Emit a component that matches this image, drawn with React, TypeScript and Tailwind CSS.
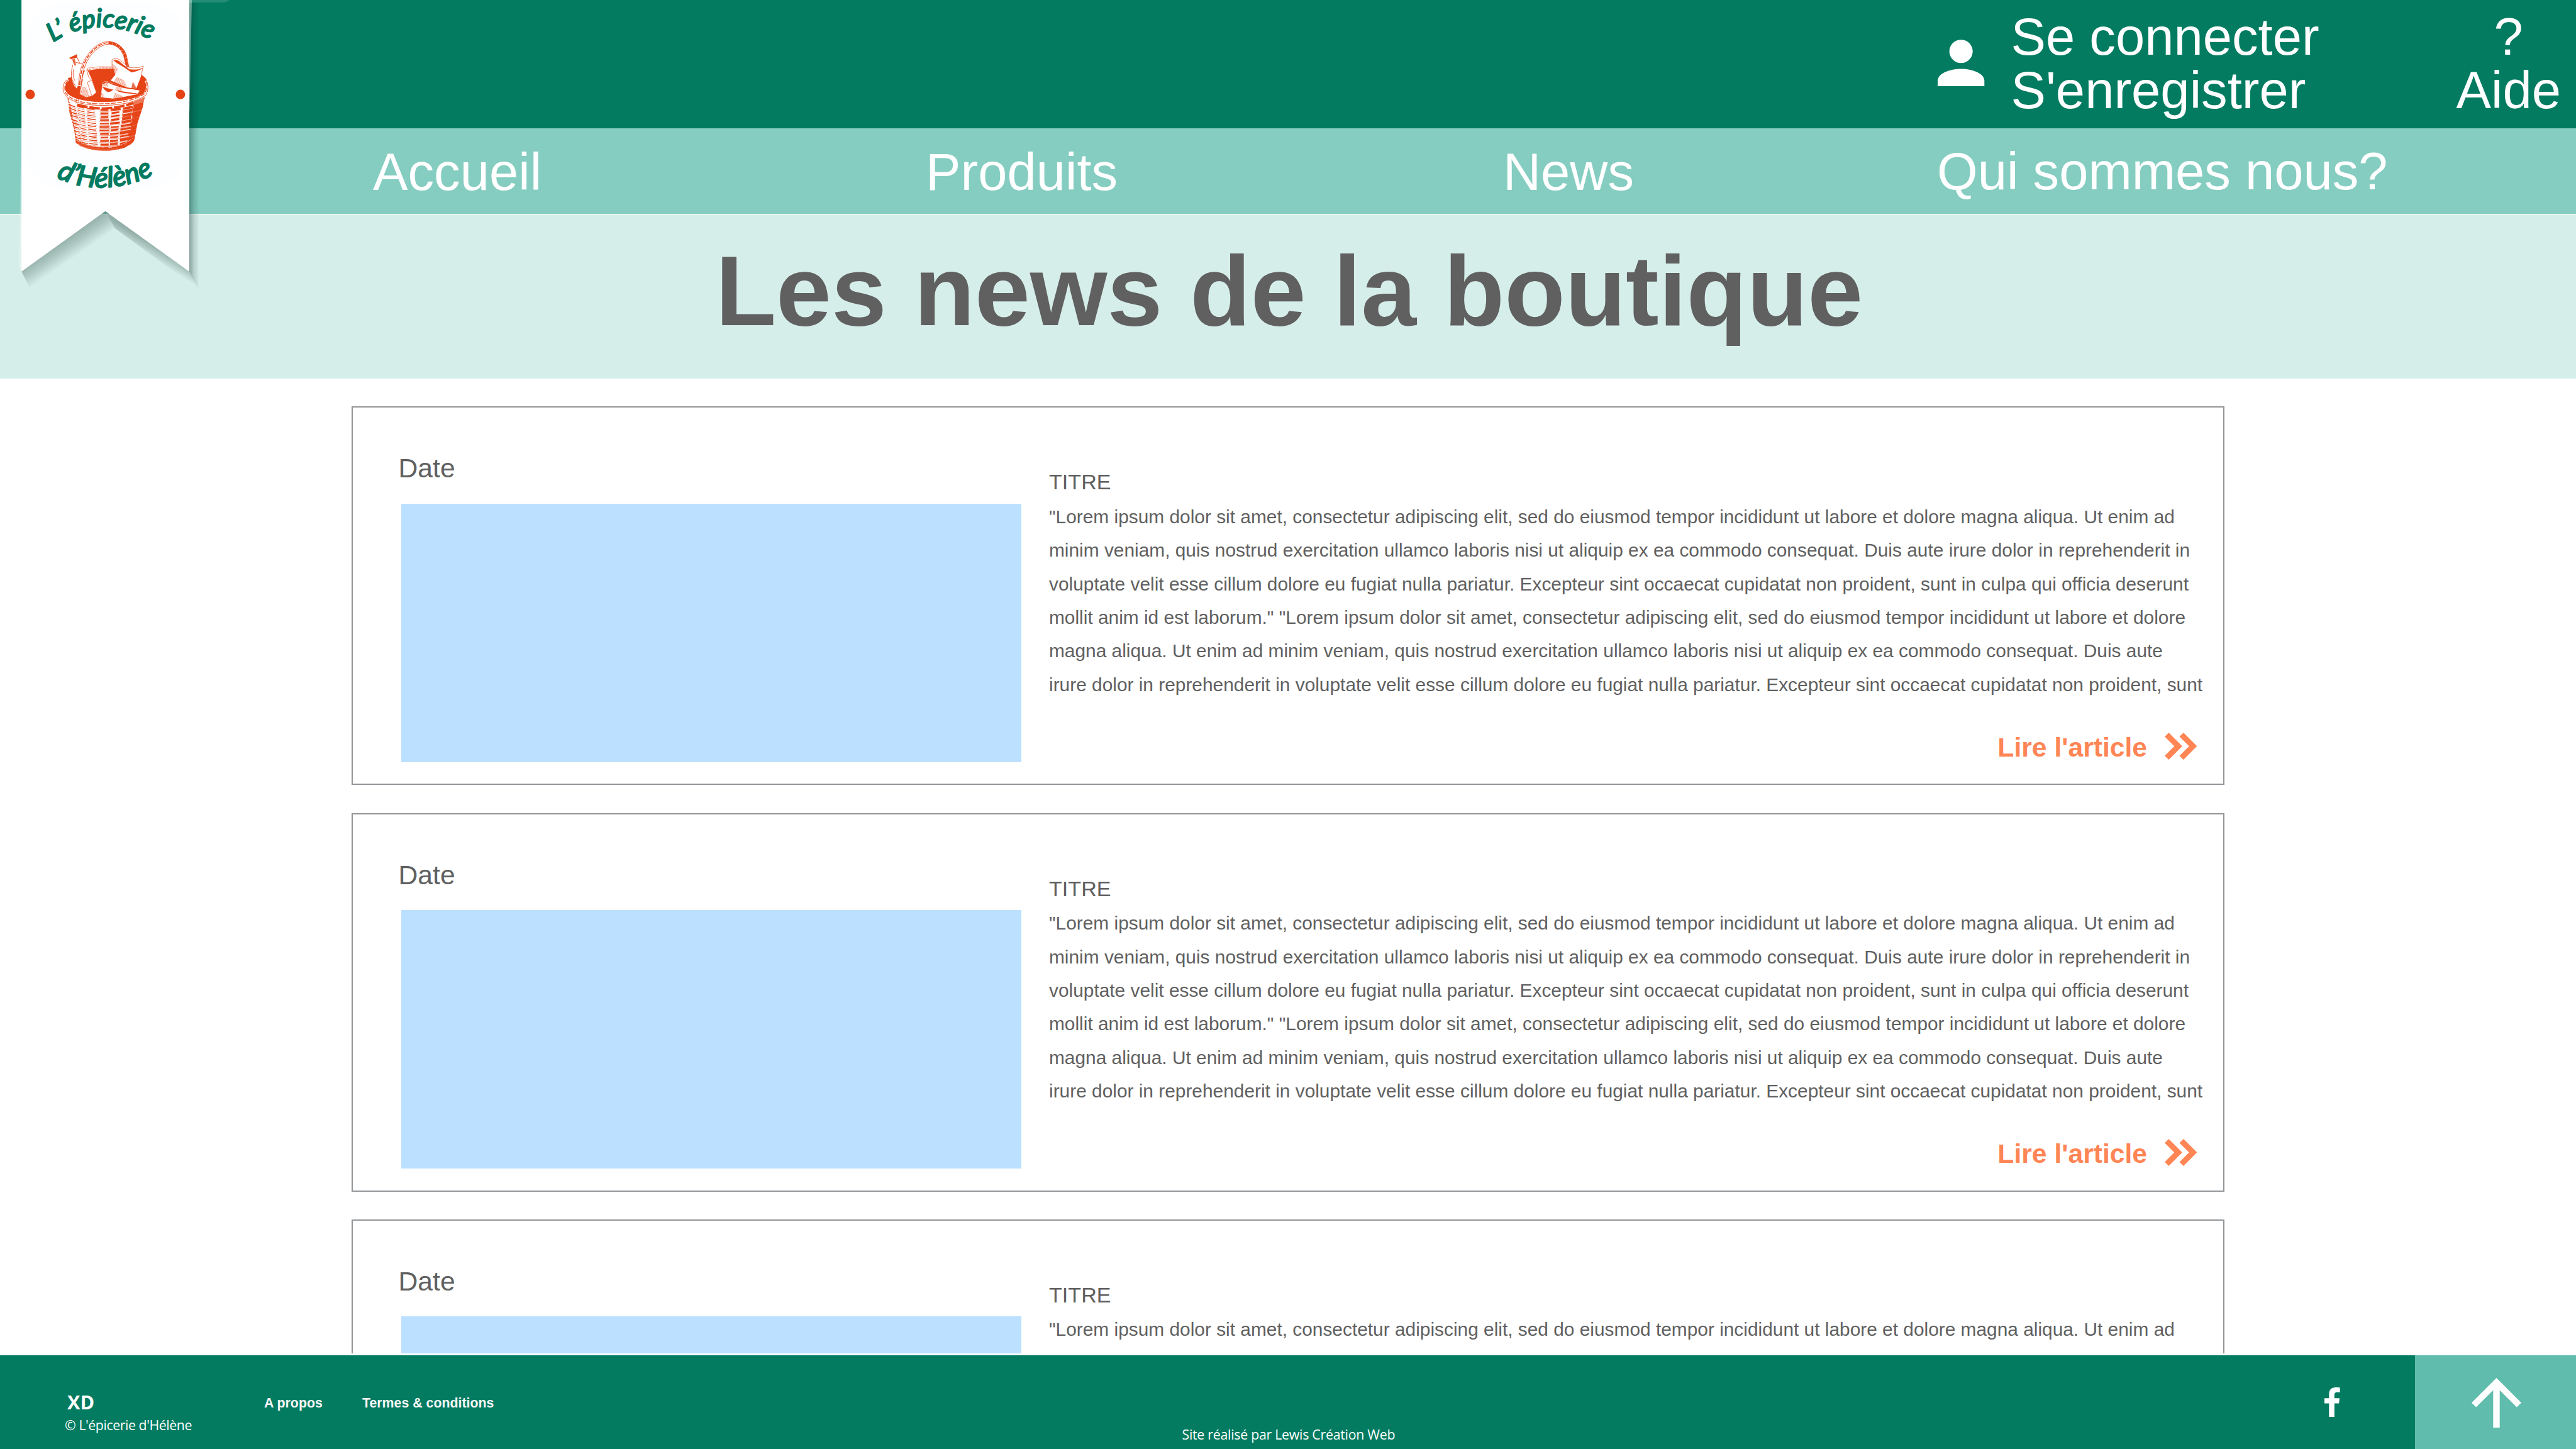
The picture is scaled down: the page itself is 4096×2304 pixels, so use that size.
import React from "react";

const ARTICLE_LINES = [
  '"Lorem ipsum dolor sit amet, consectetur adipiscing elit, sed do eiusmod tempor incididunt ut labore et dolore magna aliqua. Ut enim ad',
  "minim veniam, quis nostrud exercitation ullamco laboris nisi ut aliquip ex ea commodo consequat. Duis aute irure dolor in reprehenderit in",
  "voluptate velit esse cillum dolore eu fugiat nulla pariatur. Excepteur sint occaecat cupidatat non proident, sunt in culpa qui officia deserunt",
  'mollit anim id est laborum." "Lorem ipsum dolor sit amet, consectetur adipiscing elit, sed do eiusmod tempor incididunt ut labore et dolore',
  "magna aliqua. Ut enim ad minim veniam, quis nostrud exercitation ullamco laboris nisi ut aliquip ex ea commodo consequat. Duis aute",
  "irure dolor in reprehenderit in voluptate velit esse cillum dolore eu fugiat nulla pariatur. Excepteur sint occaecat cupidatat non proident, sunt",
];

const ORANGE = "#e64417";
const GREEN = "#027b61";

/** Deterministic noise, so that the wicker strokes never move between renders. */
function noise(n: number): number {
  const v = Math.sin(n * 127.1 + 11.7) * 43758.5453;
  return v - Math.floor(v);
}

const WICKER_COLUMNS = [
  { x: 165, w: 62, weight: 9 },
  { x: 240, w: 62, weight: 8 },
  { x: 325, w: 75, weight: 10 },
  { x: 445, w: 78, weight: 17 },
  { x: 545, w: 78, weight: 20 },
  { x: 650, w: 86, weight: 25 },
  { x: 745, w: 90, weight: 30 },
];

function Wicker() {
  const strokes: React.ReactElement[] = [];
  WICKER_COLUMNS.forEach((col, c) => {
    for (let r = 0; r < 12; r++) {
      const n = c * 31 + r;
      const centre = col.x + col.w / 2;
      const cx = centre + (490 - centre) * (r / 12) * 0.2;
      const y = 708 + r * 31 - Math.pow((cx - 490) / 330, 2) * 48 + noise(n) * 6;
      const half = (col.w / 2) * (0.85 + noise(n + 5) * 0.3);
      const tilt = ((490 - cx) / 330) * 14;
      strokes.push(
        <path
          key={`k${n}`}
          d={`M${cx - half} ${y - tilt}Q${cx - half * 0.3} ${y + 2} ${cx + half} ${y + tilt}`}
          strokeWidth={col.weight * (0.7 + noise(n + 9) * 0.4)}
        />,
        <path
          key={`t${n}`}
          d={`M${cx - half - 8} ${y - tilt + 14}L${cx + half + 6} ${y + tilt + 17}`}
          strokeWidth={3.5}
          opacity={0.75}
        />
      );
    }
  });
  return <g>{strokes}</g>;
}

function Basket() {
  return (
    <g transform="translate(150 90) scale(0.33333)" fill="none" stroke={ORANGE} strokeWidth="5" strokeLinejoin="round">
      <defs>
        <clipPath id="basket-body">
          <path d="M152 590Q300 690 480 690Q700 680 850 585L826 690L780 830L756 960Q752 1010 690 1035Q650 1068 600 1070Q500 1098 400 1076Q290 1062 230 1010L212 880L172 740Z" />
        </clipPath>
        <pattern id="hatch" width="9" height="9" patternUnits="userSpaceOnUse" patternTransform="rotate(35)">
          <path d="M0 2H9" stroke={ORANGE} strokeWidth="3" />
        </pattern>
      </defs>

      {/* woven body */}
      <g clipPath="url(#basket-body)">
        <Wicker />
        <path d="M850 585L826 690L770 850L750 980L690 1030L725 850L745 640Z" fill={ORANGE} stroke="none" opacity="0.72" />
        <path d="M150 590L235 1010" strokeWidth="22" strokeDasharray="9 5" />
        <path d="M225 985Q330 1062 480 1062Q660 1062 752 965" strokeWidth="34" opacity="0.88" />
        <path d="M235 985Q330 1042 480 1046M520 1050Q640 1040 740 965" stroke="#fff" strokeWidth="4" strokeDasharray="34 12" />
        <path d="M240 668Q480 735 745 650" strokeWidth="26" strokeDasharray="95 16" />
      </g>

      {/* hollow of the basket */}
      <path d="M120 500Q125 430 190 420L330 350Q440 335 560 345L815 400Q872 430 875 500Q870 600 700 640Q480 680 260 635Q130 600 120 500Z" fill={ORANGE} stroke="none" />
      <path d="M330 340Q440 318 560 328L560 346Q440 340 340 362Z" fill="#fff" strokeWidth="3" />
      <path d="M345 352Q440 330 555 338" strokeWidth="4" strokeDasharray="22 8" />

      {/* rim */}
      <path d="M160 440Q108 470 122 540Q150 640 420 655Q700 665 840 580Q890 520 860 450" stroke="#fff" strokeWidth="30" />
      <path d="M150 440Q95 490 122 560Q170 660 420 672Q720 680 855 580Q895 510 850 430" strokeWidth="5" />
      <path d="M170 450Q125 490 142 545Q190 620 420 640Q690 645 830 570Q870 520 846 462" strokeWidth="5" />
      <path d="M158 450Q112 500 140 565Q200 650 420 658Q700 662 840 570Q880 510 856 455" strokeWidth="7" strokeDasharray="42 13" />

      {/* bottle */}
      <path d="M205 300L190 370Q180 430 215 500L235 520L262 470L280 380L300 310L262 292L240 235L190 255Z" fill="#fff" stroke="none" />
      <path d="M200 310Q180 400 195 440L228 510M235 235L262 292L300 312M222 285L265 298M208 350Q196 400 218 450" />
      <path d="M172 248L236 218L238 245L184 258Z" fill={ORANGE} strokeWidth="4" />
      <path d="M195 262L218 258L232 318L214 314Z" fill={ORANGE} stroke="none" opacity="0.8" />

      {/* carton */}
      <path d="M325 340L372 440L412 555L372 588L320 600L262 570L275 480L300 380Z" fill="#fff" stroke="none" />
      <path d="M325 355L342 418L372 448L330 465L370 585M372 448L410 552" strokeWidth="4" />
      <path d="M285 505L325 515L358 600L300 608L270 570Z" fill="url(#hatch)" stroke="none" />

      {/* cloth */}
      <path d="M552 265Q585 240 625 268L705 338Q770 350 832 322L808 420L770 520L690 515L540 450L580 400Z" fill="#fff" stroke="none" />
      <path d="M552 345V265Q585 238 625 268L705 332Q770 345 832 322L812 405" strokeWidth="4" />
      <path d="M566 268Q600 256 640 300L705 350Q770 362 826 340Q780 368 725 376L650 325L590 290Z" fill={ORANGE} strokeWidth="3" />
      <path d="M558 300L608 348L575 412L556 395Z" fill="url(#hatch)" stroke="none" />
      <path d="M596 416L660 450L690 515L560 475Z" fill="url(#hatch)" stroke="none" />
      <path d="M738 460L772 520H724Z" fill={ORANGE} stroke="none" opacity="0.75" />

      {/* loaf */}
      <path d="M468 470Q490 445 540 468Q600 500 700 520L800 540L780 572Q690 590 640 600L560 612L450 600Z" fill="#fff" stroke="none" />
      <path d="M470 480Q495 448 545 478Q640 520 795 530" strokeWidth="9" />
      <path d="M468 505Q500 520 560 532Q545 552 515 552Q485 540 468 505Z" fill={ORANGE} strokeWidth="3" />
      <path d="M585 535Q690 560 790 566Q700 578 610 550Z" fill={ORANGE} stroke="none" />
      <path d="M475 462L520 470L515 512L472 495ZM590 505L640 515V545L580 535ZM575 560L640 585L660 600L560 615ZM450 540L475 575L480 610L445 600Z" fill="url(#hatch)" stroke="none" />

      {/* braided handle */}
      <path d="M262 500Q268 330 345 215Q430 105 530 110Q630 125 668 225L692 330" stroke="#fff" strokeWidth="32" />
      <path d="M252 490Q258 320 335 220Q420 100 530 100Q640 115 680 220L704 335M276 490Q285 330 362 222Q440 125 530 124Q620 135 655 225L675 310" strokeWidth="5" />
      <path d="M264 490Q270 330 348 220Q430 112 530 112" strokeWidth="9" strokeDasharray="38 12" />
      <path d="M520 112Q630 122 668 225L690 332" strokeWidth="23" strokeDasharray="34 3" />
      <path d="M290 440L250 630M268 430L230 655" strokeWidth="5" strokeDasharray="30 6" />
    </g>
  );
}

/** White ribbon that hangs over the header, the navigation and the banner. */
function Ribbon() {
  return (
    <svg className="absolute left-0 top-0 z-10 h-[480px] w-[400px]" viewBox="0 0 750 900" aria-label="L'épicerie d'Hélène">
      <defs>
        <linearGradient id="shade-right" gradientUnits="userSpaceOnUse" x1="562" y1="0" x2="592" y2="0">
          <stop offset="0" stopColor="#0a2a22" stopOpacity="0.42" />
          <stop offset="0.55" stopColor="#0a2a22" stopOpacity="0.15" />
          <stop offset="1" stopColor="#0a2a22" stopOpacity="0.03" />
        </linearGradient>
        <linearGradient id="shade-left-tail" gradientUnits="userSpaceOnUse" x1="189" y1="719" x2="222" y2="767">
          <stop offset="0" stopColor="#0a2a22" stopOpacity="0.3" />
          <stop offset="0.4" stopColor="#0a2a22" stopOpacity="0.2" />
          <stop offset="1" stopColor="#0a2a22" stopOpacity="0" />
        </linearGradient>
        <linearGradient id="shade-right-tail" gradientUnits="userSpaceOnUse" x1="439" y1="719" x2="419" y2="752">
          <stop offset="0" stopColor="#0a2a22" stopOpacity="0.32" />
          <stop offset="0.4" stopColor="#0a2a22" stopOpacity="0.2" />
          <stop offset="1" stopColor="#0a2a22" stopOpacity="0" />
        </linearGradient>
        <path id="arc-top" d="M158 126Q308 26 500 146" />
        <path id="arc-bottom" d="M168 529Q322 601 500 500" />
      </defs>

      <path d="M564 0H683Q676 7 667 7H564Z" fill="#fff" opacity="0.14" />
      <path d="M564 8L592 8V864L564 809Z" fill="url(#shade-right)" />
      <path d="M564 0H572L565 330H564Z" fill="#fff" opacity="0.4" />
      <path d="M64 380V800L56 804Z" fill="#fff" opacity="0.25" />
      <path d="M64 809L314 629L342 680L92 864Z" fill="url(#shade-left-tail)" />
      <path d="M314 629L564 809L592 864L342 680Z" fill="url(#shade-right-tail)" />
      <path d="M64 0H564.200V809.500L314 629.500L64 809.500Z" fill="#fff" />
      <rect x="78" y="8" width="474" height="556" rx="110" fill="#fdfeff" />

      <g
        fill={GREEN}
        stroke={GREEN}
        strokeWidth="4"
        strokeLinejoin="round"
        fontFamily="Lato, 'Open Sans', sans-serif"
        fontStyle="italic"
        fontWeight="400"
      >
        <text fontSize="76">
          <textPath href="#arc-top">L’ épicerie</textPath>
        </text>
        <text fontSize="83">
          <textPath href="#arc-bottom">d’Hélène</textPath>
        </text>
      </g>

      <ellipse cx="90" cy="281.500" rx="14" ry="14.500" fill={ORANGE} />
      <ellipse cx="538" cy="281.500" rx="14" ry="14.500" fill={ORANGE} />
      <Basket />
    </svg>
  );
}

function PersonIcon() {
  return (
    <svg className="mt-[62.600px] h-[74.600px] w-[74.300px]" viewBox="4 4 16 16" fill="#fff">
      <circle cx="12" cy="8" r="4" />
      <path d="M4 20V18A8 4 0 0 1 20 18V20Z" />
    </svg>
  );
}

function DoubleChevron() {
  return (
    <svg className="mt-[0.700px] h-[42.900px] w-[51.400px]" viewBox="0 0 96.3 80.4" fill="#ff8554">
      <path d="M0 11.700L12.100 0L52.300 40.200L12.100 80.400L0 68.700L28.700 40.200Z" />
      <path d="M44 11.700L56.100 0L96.300 40.200L56.100 80.400L44 68.700L72.700 40.200Z" />
    </svg>
  );
}

/** A teaser shows only the opening line, without the link to the article. */
function NewsCard({ teaser = false }: { teaser?: boolean }) {
  const lines = teaser ? ARTICLE_LINES.slice(0, 1) : ARTICLE_LINES;
  return (
    <article className="flex h-[602px] w-[2978px] shrink-0 border-2 border-[#929699] bg-white text-[#606060]">
      <div className="w-[1063px] shrink-0 pl-[72.500px] pt-[72px]">
        <p className="text-[42.670px] leading-[48px]">Date</p>
        <div className="ml-[4.500px] mt-[32.500px] h-[411px] w-[986px] bg-[#bce0ff]" />
      </div>
      <div className="flex grow flex-col pl-[44px] pt-[92px]">
        <h2 className="text-[34.130px] leading-[52px]">TITRE</h2>
        <p className="mt-[2.500px] whitespace-nowrap text-[29.870px] leading-[53.330px]">
          {lines.map((line) => (
            <span key={line} className="block">
              {line}
            </span>
          ))}
        </p>
        {!teaser && (
          <a className="mt-[49.200px] flex items-start justify-end gap-[27.500px] pr-[42px] text-[42.670px] font-bold leading-[48px] text-[#ff8554]">
            Lire l'article
            <DoubleChevron />
          </a>
        )}
      </div>
    </article>
  );
}

export default function App() {
  return (
    <div className="relative flex h-[2304px] w-[4096px] flex-col overflow-hidden bg-white font-['Liberation_Sans',Arial,sans-serif]">
      <Ribbon />

      <header className="flex h-[203.500px] shrink-0 justify-end bg-[#027b61] pr-[24px] text-[83.200px] leading-[85.330px] text-white">
        <PersonIcon />
        <div className="ml-[42px] w-[490px] whitespace-nowrap pt-[15.500px]">
          <p>Se connecter</p>
          <p>S'enregistrer</p>
        </div>
        <div className="ml-[218px] pt-[15.500px] text-center">
          <p>?</p>
          <p>Aide</p>
        </div>
      </header>

      <nav className="flex h-[136.500px] shrink-0 items-center whitespace-nowrap bg-[#85cdc1] pl-[593px] text-[83.200px] leading-none text-white">
        <a className="w-[268px] pt-1">Accueil</a>
        <a className="ml-[611px] w-[305px] pt-1">Produits</a>
        <a className="ml-[613px] w-[208px] pt-1">News</a>
        <a className="ml-[482px] pt-px">Qui sommes nous?</a>
      </nav>

      <section className="mt-[1.300px] h-[261px] shrink-0 bg-[#d6eee9]">
        <h1 className="pl-[1137.700px] text-[157.870px] font-bold leading-[242.800px] text-[#606060]">Les news de la boutique</h1>
      </section>

      <main className="flex h-[1550.200px] shrink-0 flex-col gap-[44.300px] overflow-hidden pl-[559px] pt-[44.100px]">
        <NewsCard />
        <NewsCard />
        <NewsCard teaser />
      </main>

      <footer className="mt-[2.200px] flex grow whitespace-nowrap bg-[#027b61] text-white">
        <div className="w-[420px] pl-[103px] pt-[54px] font-['Open_Sans',sans-serif]">
          <p className="pl-[4px] text-[30.600px] font-bold leading-[40px]">XD</p>
          <p className="mt-[2.500px] text-[21.330px] leading-[30px] tracking-[-0.440px]">© L'épicerie d'Hélène</p>
        </div>
        <a className="w-[156px] pt-[61.600px] text-[21.330px] font-bold leading-[30px] text-[#f7f7f7]">A propos</a>
        <a className="w-[1303.500px] pt-[61.600px] text-[21.330px] font-bold leading-[30px] text-[#f7f7f7]">Termes &amp; conditions</a>
        <p className="w-[1816.500px] pt-[111.500px] font-['Open_Sans',sans-serif] text-[21.330px] leading-[30px] tracking-[-0.270px]">
          Site réalisé par Lewis Création Web
        </p>
        <svg className="mt-[51.200px] h-[46.900px] w-[24.700px]" viewBox="0 0 46.3 88" fill="#fff">
          <path d="M13.700 88V47.700H0V32.300H13.700V20.500C13.700 7 21 0 33.500 0C39 0 43 .3 46.300 .8V14.700H38.500C31.500 14.700 29.700 18.500 29.700 23V32.300H45L43.400 47.700H29.700V88Z" />
        </svg>
        <button className="ml-auto flex w-[256px] items-center justify-center bg-[#60bdae] pl-[2px] pt-[2px]">
          <svg className="h-[79px] w-[79px]" viewBox="0 0 148 148" fill="#fff">
            <path d="M74 0L148 74L134.500 87.300L83.700 36.700V148H64.300V36.700L13.500 87.300L0 74Z" />
          </svg>
        </button>
      </footer>
    </div>
  );
}
